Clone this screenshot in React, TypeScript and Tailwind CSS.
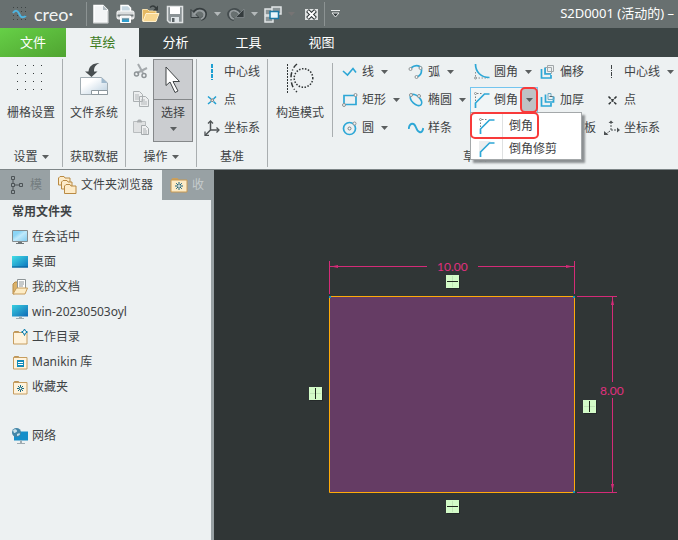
import React from 'react'

type IconComponent = React.FunctionComponent
interface CommandItem {
	label: string,
	icon: IconComponent,
	menu?: boolean
}

const CaretIcon: React.FunctionComponent<{className?: string}> = ({className = 'text-[#5b5f60]'}) => (
	<svg aria-hidden="true" className={`shrink-0 ${className}`} width="7" height="4" viewBox="0 0 7 4">
		<path d="M0 0h7L3.5 4z" fill="currentColor" />
	</svg>
)

/* Quick access bar */

const CreoIcon: IconComponent = () => (
	<svg aria-hidden="true" width="16" height="16" viewBox="0 0 16 16">
		<path d="M1 1.5h14M1 5.5h14M1 9.5h14M1 13.5h14" stroke="#3c4344" strokeDasharray="1 3" />
		<path d="M1 7c1.800-3 4.500-3 6 .5s3.500 5 7 2.500" fill="none" stroke="#4fb4e0" strokeWidth="2" />
	</svg>
)

const NewIcon: IconComponent = () => (
	<svg aria-hidden="true" width="18" height="20" viewBox="0 0 18 20">
		<path d="M2 1.500h9l4.500 4.500v12.500H2z" fill="#f3f5f6" stroke="#fff" strokeWidth="1.500" />
		<path d="M11 1.500v4.500h4.500z" fill="#aeb8bd" />
		<path d="M1.500 19h14.500V7" fill="none" stroke="#b7bcbd" />
	</svg>
)

const PrintIcon: IconComponent = () => (
	<svg aria-hidden="true" width="19" height="20" viewBox="0 0 19 20">
		<path d="M5 1.500h7l2.500 2.500v5H5z" fill="#c6d7e1" stroke="#fff" strokeWidth="1.500" />
		<rect x="1" y="7" width="17" height="8" rx="1.500" fill="#d9dcdd" stroke="#fff" />
		<path d="M1.500 11.500h16" stroke="#71797b" strokeWidth="2" />
		<path d="M4.500 12h10v6.500h-10z" fill="#eef2f4" stroke="#fff" />
		<path d="M6 14.500h7v3.500H6z" fill="#2f9fd0" />
		<path d="M6 15h7" stroke="#788286" />
	</svg>
)

const OpenIcon: IconComponent = () => (
	<svg aria-hidden="true" width="19" height="20" viewBox="0 0 19 20">
		<path d="M1.500 17V5.500h5L8 7h7v10z" fill="#e5b861" stroke="#f4dfae" />
		<path d="M2 17.500l3-8h13l-3 8z" fill="#f8d791" stroke="#fff0cd" />
		<path d="M9 3.500c2-2 4-2 6 .5" fill="none" stroke="#343b3c" strokeWidth="1.500" />
		<path d="M17 1.500v5h-5z" fill="#343b3c" />
	</svg>
)

const SaveIcon: IconComponent = () => (
	<svg aria-hidden="true" width="18" height="20" viewBox="0 0 18 20">
		<path d="M1.500 2.500h15v16h-13l-2-2z" fill="#8b9396" stroke="#dfe2e3" strokeWidth="1.500" />
		<path d="M4 3h10v7H4z" fill="#fff" />
		<path d="M5 13h8v5H5z" fill="#dfe5e8" />
		<path d="M6 14h2.500v4H6z" fill="#596164" />
	</svg>
)

const UndoIcon: IconComponent = () => (
	<svg aria-hidden="true" width="18" height="14" viewBox="0 0 18 14">
		<path d="M3 7c2-4 6-5.500 9.500-4 4 2 3.500 8-1.500 9" fill="none" stroke="#363d3f" strokeWidth="3.500" />
		<path d="M1 2.500v8h8z" fill="#858c8e" stroke="#363d3f" />
		<path d="M4 8c2-4 5-5.500 8-4 3.500 1.500 3 6.500-1 8" fill="none" stroke="#969c9e" strokeWidth="2" />
	</svg>
)

const RedoIcon: IconComponent = () => (
	<svg aria-hidden="true" width="18" height="14" viewBox="0 0 18 14">
		<path d="M7 12.500c-6-1.500-6.500-7-2.500-9 3.500-1.500 6.500 0 8.500 3" fill="none" stroke="#454d4f" strokeWidth="3.500" />
		<path d="M17 2v8.500H8.500z" fill="#343b3d" stroke="#8a9193" strokeWidth=".7" />
		<path d="M7 12c-5-1.500-5-6.500-2-8 3-1.200 5.500.5 7.500 3" fill="none" stroke="#969c9e" strokeWidth="1.700" />
	</svg>
)

const WindowsIcon: IconComponent = () => (
	<svg aria-hidden="true" width="18" height="17" viewBox="0 0 18 17">
		<g fill="#8c9597" stroke="#e1e5e6" strokeWidth="1.500">
			<path d="M1 3h8v6H1z" />
			<path d="M8 1h9v7H8z" />
			<path d="M1 10h8v6H1z" />
		</g>
		<path d="M6 5.500h8.500v7H6z" fill="#e8f6fb" stroke="#1c79a4" strokeWidth="1.500" />
	</svg>
)

const CloseWindowIcon: IconComponent = () => (
	<svg aria-hidden="true" width="13" height="11" viewBox="0 0 13 11">
		<rect width="13" height="11" fill="#dfe2e2" />
		<path d="M2.500 1.500l8 8M10.500 1.500l-8 8" stroke="#333a3c" strokeWidth="4" />
		<path d="M3 2l7 7M10 2L3 9" stroke="#fff" strokeWidth="1.800" />
	</svg>
)

const CustomizeIcon: IconComponent = () => (
	<svg aria-hidden="true" width="9" height="8" viewBox="0 0 9 8">
		<path d="M0 .5h9" stroke="#e8eaea" />
		<path d="M1 3h7L4.500 7z" fill="#30383a" stroke="#e8eaea" />
	</svg>
)

/* Ribbon: large icons */

const GridIcon: IconComponent = () => (
	<svg aria-hidden="true" width="28" height="28" viewBox="0 0 28 28">
		<path d="M0 2.500h28M0 10.500h28M0 18.500h28M0 26.500h28" stroke="#34393a" strokeDasharray="1 7" />
	</svg>
)

const FileSystemIcon: IconComponent = () => (
	<svg aria-hidden="true" width="28" height="34" viewBox="0 0 28 34">
		<defs>
			<linearGradient id="sheet" x1="0" y1="0" x2="1" y2="1">
				<stop offset=".3" stopColor="#fff" />
				<stop offset="1" stopColor="#b8cedf" />
			</linearGradient>
		</defs>
		<path d="M.5 14.500h21l6 5.500v11.500H.5z" fill="url(#sheet)" stroke="#a2adb3" />
		<path d="M21.500 14.500v5.500h6z" fill="#9fb9cd" />
		<path d="M11.500 27.500h16v4h-16zM18.500 27.500v4" fill="#fff" stroke="#8c979d" />
		<path d="M19.500 0C12.500 0 9 3.500 8.500 8.500H5L11.500 14l6-5.500h-3.500C14 4 15.500 2 19.500 0z" fill="#484e50" />
	</svg>
)

const CutIcon: IconComponent = () => (
	<svg aria-hidden="true" width="16" height="16" viewBox="0 0 16 16">
		<path d="M5 1l5 9M14 5L4 10" stroke="#a5aaad" strokeWidth="2" />
		<circle cx="3.500" cy="11" r="2" fill="none" stroke="#8e9497" strokeWidth="1.500" />
		<circle cx="11" cy="12.500" r="2" fill="none" stroke="#8e9497" strokeWidth="1.500" />
	</svg>
)

const CopyIcon: IconComponent = () => (
	<svg aria-hidden="true" width="16" height="16" viewBox="0 0 16 16">
		<path d="M.5.5h6l3 3v7h-9zM6.500 5.500h6l3 3v7h-9z" fill="#eceeef" stroke="#abb0b2" />
		<path d="M2 4h4M2 6h4M2 8h4M8 9h4M8 11h6M8 13h6" stroke="#b3b7b9" />
	</svg>
)

const PasteIcon: IconComponent = () => (
	<svg aria-hidden="true" width="16" height="16" viewBox="0 0 16 16">
		<path d="M.5 2.500h12v11H.5z" fill="#e0e2e3" stroke="#b9bdbf" />
		<path d="M4 3.500h5V2L7.500.5h-2L4 2z" fill="#a9adaf" />
		<path d="M8.500 6.500h4l3 3v6h-7z" fill="#f0f1f2" stroke="#a5aaac" />
		<path d="M10 10h3M10 12h4M10 14h4" stroke="#acb1b3" />
	</svg>
)

const CursorIcon: IconComponent = () => (
	<svg aria-hidden="true" width="16" height="28" viewBox="0 0 16 28">
		<path d="M1 1v18.500l4-3.500 5 10.500 3-1.500-5-9.500h6.500z" fill="#fff" stroke="#3f4345" />
	</svg>
)

const ConstructionIcon: IconComponent = () => (
	<svg aria-hidden="true" width="28" height="30" viewBox="0 0 28 30">
		<g fill="none" stroke="#303536" strokeWidth="1.500">
			<path d="M1.500 1v29" strokeDasharray="2 1" strokeWidth="1" />
			<path d="M11 1C3 7 3 23 11 29" strokeDasharray="5 2 1 2" />
			<circle cx="17.500" cy="15" r="9.300" strokeDasharray="1.500 1.500" />
		</g>
	</svg>
)

/* Ribbon: small icons */

const CenterLineIcon: IconComponent = () => (
	<svg aria-hidden="true" width="16" height="16" viewBox="0 0 16 16">
		<path d="M8 0v16" stroke="#1d9fd2" strokeWidth="2" strokeDasharray="4 1" />
	</svg>
)

const PointIcon: IconComponent = () => (
	<svg aria-hidden="true" width="16" height="16" viewBox="0 0 16 16">
		<path d="M4 4.500l3 2.500M12 4.500L9.500 7M4 12l3-2.500M12 12L9.500 9.500" stroke="#1d9fd2" strokeWidth="1.500" />
		<circle cx="8.200" cy="8.200" r="1.300" fill="#fff" stroke="#676d6f" />
	</svg>
)

const AxesIcon: IconComponent = () => (
	<svg aria-hidden="true" width="16" height="16" viewBox="0 0 16 16">
		<path d="M6.500 1.500V10M6.500 10H15M6.500 10L1.500 15" stroke="#4d5254" strokeWidth="1.500" />
		<path d="M4 3.500L6.500 1 9 3.500M12.500 7.500L15 10l-2.500 2.500M1 11.500v4h4" fill="none" stroke="#4d5254" strokeWidth="1.300" />
	</svg>
)

const LineIcon: IconComponent = () => (
	<svg aria-hidden="true" width="16" height="16" viewBox="0 0 16 16">
		<path d="M1 7l4.500 4 5.500-6.500 3 4" fill="none" stroke="#2da7d6" strokeWidth="1.600" />
	</svg>
)

const RectangleIcon: IconComponent = () => (
	<svg aria-hidden="true" width="16" height="16" viewBox="0 0 16 16">
		<path d="M2 3.500h12v9H2z" fill="none" stroke="#2da7d6" strokeWidth="1.700" />
		<circle cx="13.500" cy="3" r="1.500" fill="#f4f6f6" stroke="#8d9294" />
		<circle cx="2" cy="13" r="1.500" fill="#f4f6f6" stroke="#8d9294" />
	</svg>
)

const CircleIcon: IconComponent = () => (
	<svg aria-hidden="true" width="16" height="16" viewBox="0 0 16 16">
		<circle cx="7.500" cy="8.500" r="6" fill="none" stroke="#2da7d6" strokeWidth="1.700" />
		<circle cx="7.500" cy="8.500" r="1.500" fill="#f4f6f6" stroke="#777d7f" />
		<circle cx="12.500" cy="3.500" r="1.500" fill="#f4f6f6" stroke="#8d9294" />
	</svg>
)

const ArcIcon: IconComponent = () => (
	<svg aria-hidden="true" width="16" height="16" viewBox="0 0 16 16">
		<path d="M3 4c5-4.500 11-2 10.500 2.500 0 3-2 5.500-4.500 6.500" fill="none" stroke="#2da7d6" strokeWidth="1.700" />
		<g fill="#f4f6f6" stroke="#8d9294">
			<circle cx="2.500" cy="5" r="1.500" />
			<circle cx="12.500" cy="4" r="1.500" />
			<circle cx="8.500" cy="13" r="1.500" />
		</g>
	</svg>
)

const EllipseIcon: IconComponent = () => (
	<svg aria-hidden="true" width="16" height="16" viewBox="0 0 16 16">
		<ellipse cx="8" cy="8" rx="7" ry="4" transform="rotate(43 8 8)" fill="none" stroke="#2da7d6" strokeWidth="1.600" />
		<circle cx="3" cy="3" r="1.500" fill="#f4f6f6" stroke="#8d9294" />
		<circle cx="11" cy="4" r="1.500" fill="#f4f6f6" stroke="#8d9294" />
	</svg>
)

const SplineIcon: IconComponent = () => (
	<svg aria-hidden="true" width="16" height="16" viewBox="0 0 16 16">
		<path d="M.7 9C1.500 2.500 6 2 8 7.500s6 7 7.300.5" fill="none" stroke="#2da7d6" strokeWidth="1.900" />
	</svg>
)

const FilletIcon: IconComponent = () => (
	<svg aria-hidden="true" width="16" height="16" viewBox="0 0 16 16">
		<path d="M1.500 8v6H14" fill="none" stroke="#8c9294" strokeDasharray="1.500 1.500" />
		<path d="M1.500 0C1.500 8 7 13.500 15.500 13.500" fill="none" stroke="#2da7d6" strokeWidth="1.700" />
		<circle cx="1.500" cy="14" r="1" fill="#f4f6f6" stroke="#8c9294" />
	</svg>
)

const ChamferIcon: IconComponent = () => (
	<svg aria-hidden="true" width="16" height="16" viewBox="0 0 16 16">
		<path d="M1.500 9V1.500H9" fill="none" stroke="#777d7f" strokeDasharray="1.500 1.500" />
		<path d="M1.500 16v-5l9-9h5" fill="none" stroke="#2da7d6" strokeWidth="1.700" />
		<circle cx="1.500" cy="1.500" r="1" fill="#fff" stroke="#8c9294" />
	</svg>
)

const ChamferTrimIcon: IconComponent = () => (
	<svg aria-hidden="true" width="16" height="16" viewBox="0 0 16 16">
		<path d="M0 0h12L1 11H0z" fill="#eceeef" />
		<path d="M1.500 16v-5l9-9h5" fill="none" stroke="#2da7d6" strokeWidth="1.700" />
	</svg>
)

const OffsetIcon: IconComponent = () => (
	<svg aria-hidden="true" width="16" height="16" viewBox="0 0 16 16">
		<path d="M7.500 1.500h6v6h-6zM5.500 3.500h6v6h-6z" fill="none" stroke="#a1a7a9" />
		<path d="M5 3.500v6.500h6" fill="none" stroke="#2da7d6" strokeWidth="1.700" />
		<path d="M1.500 5v9H11v-3" fill="none" stroke="#2da7d6" strokeWidth="1.700" />
	</svg>
)

const ThickenIcon: IconComponent = () => (
	<svg aria-hidden="true" width="16" height="16" viewBox="0 0 16 16">
		<path d="M1.500 5v9H11v-3M5.500 2.500V10h8V5" fill="none" stroke="#2da7d6" strokeWidth="1.700" />
		<path d="M8 1.500h3v3h3v3H8z" fill="none" stroke="#6eaac4" />
		<path d="M9.500 4.500h3" stroke="#5c6466" />
	</svg>
)

const PaletteIcon: IconComponent = () => (
	<svg aria-hidden="true" width="16" height="16" viewBox="0 0 16 16">
		<path d="M1.500 2.500h13v11h-13zM6 3v10" fill="none" stroke="#2da7d6" />
	</svg>
)

const SketchCenterLineIcon: IconComponent = () => (
	<svg aria-hidden="true" width="16" height="16" viewBox="0 0 16 16">
		<path d="M7.500 1v14" stroke="#3d4244" strokeDasharray="4 1 1 1" />
	</svg>
)

const SketchPointIcon: IconComponent = () => (
	<svg aria-hidden="true" width="16" height="16" viewBox="0 0 16 16">
		<path d="M4.500 4.500l8 8M12.500 4.500l-8 8" stroke="#303536" strokeWidth="1.500" strokeDasharray="3 1" />
	</svg>
)

const SketchAxesIcon: IconComponent = () => (
	<svg aria-hidden="true" width="16" height="16" viewBox="0 0 16 16">
		<path d="M7 2v8M7 10h7M6 11l-4 3" stroke="#4d5254" strokeDasharray="2 1" />
		<path d="M4.500 3L7 .5 9.500 3zM13 7.500l3 2.500-3 2.500zM0 11v4h4.500z" fill="#4d5254" />
	</svg>
)

/* Navigator icons */

const TreeIcon: IconComponent = () => (
	<svg aria-hidden="true" className="shrink-0" width="14" height="20" viewBox="0 0 14 20">
		<path d="M1.500 1.500h3v3h-3zM1.500 8.500h3v3h-3zM1.500 15.500h3v3h-3zM9.500 8.500h3v3h-3zM3 5v3M3 12v3M5 10h4" fill="none" stroke="#4c5356" />
	</svg>
)

const FoldersIcon: IconComponent = () => (
	<svg aria-hidden="true" width="20" height="20" viewBox="0 0 20 20">
		<g fill="#fdebc8" stroke="#b98a43">
			<path d="M1.500 10V3L3 1.500h4L8 3h5v7z" />
			<path d="M4.500 14V7L6 5.500h4L11 7h4v7z" />
			<path d="M7.500 18.500V11L9 9.500h4l1 1.500h5v7.500z" />
		</g>
	</svg>
)

const FavoritesIcon: IconComponent = () => (
	<svg aria-hidden="true" className="shrink-0" width="18" height="16" viewBox="0 0 18 16">
		<path d="M1 3l1.500-2h5L9 3z" fill="#cda05b" />
		<path d="M1 3h16v12H1z" fill="#fdebc5" stroke="#c79952" />
		<path d="M9 5v8M5 9h8M6.200 6.200l5.600 5.600M11.800 6.200l-5.600 5.600" stroke="#17617f" />
		<circle cx="9" cy="9" r="1" fill="#fff" />
	</svg>
)

const MonitorShape: React.FunctionComponent<{fill: string}> = ({fill}) => (
	<>
		<path d="M0 1h16v11.500H0z" fill={fill} />
		<path d="M7 12.500h3V14H7zM4 14h8v1H4z" fill="#9eabb1" />
	</>
)

const SessionIcon: IconComponent = () => (
	<svg aria-hidden="true" width="16" height="16" viewBox="0 0 16 16">
		<defs>
			<linearGradient id="session" x1="0" y1="0" x2="1" y2="1">
				<stop offset=".3" stopColor="#8bd5f6" />
				<stop offset=".5" stopColor="#bfe9fb" />
				<stop offset="1" stopColor="#7ccaf0" />
			</linearGradient>
		</defs>
		<path d="M.5 1.500h15v11H.5z" fill="url(#session)" stroke="#858d90" />
		<path d="M6 13h4v1h2v1H4v-1h2z" fill="#6e7678" />
	</svg>
)

const DesktopIcon: IconComponent = () => (
	<svg aria-hidden="true" width="16" height="16" viewBox="0 0 16 16">
		<defs>
			<linearGradient id="screen" x1="0" y1="0" x2="1" y2="1">
				<stop offset="0" stopColor="#43dfe6" />
				<stop offset="1" stopColor="#0a72bd" />
			</linearGradient>
		</defs>
		<path d="M0 2h16v11.500H0z" fill="url(#screen)" />
		<path d="M0 13h16" stroke="#075b94" />
	</svg>
)

const DocumentsIcon: IconComponent = () => (
	<svg aria-hidden="true" width="16" height="16" viewBox="0 0 16 16">
		<path d="M1 15V5l2-2h3v11z" fill="#dbb26a" stroke="#b58b4b" />
		<path d="M5.500.5h8v11h-8z" fill="#fff" stroke="#8d9496" />
		<path d="M7 3h5M7 5h5M7 7h4" stroke="#8d9496" />
		<path d="M1 15l3.500-6h11L13 15z" fill="#fdecc5" stroke="#c79c5b" />
	</svg>
)

const ComputerIcon: IconComponent = () => (
	<svg aria-hidden="true" width="16" height="16" viewBox="0 0 16 16">
		<defs>
			<linearGradient id="computer" x1="0" y1="0" x2="1" y2="1">
				<stop offset="0" stopColor="#38cfe0" />
				<stop offset="1" stopColor="#1069b6" />
			</linearGradient>
		</defs>
		<MonitorShape fill="url(#computer)" />
	</svg>
)

const FolderShape: IconComponent = () => (
	<>
		<path d="M1 4l1.500-2h4L8 4z" fill="#bd9558" />
		<path d="M1.500 3.500h13.500v11.500H1.500z" fill="#fff3dc" stroke="#c69d5f" />
	</>
)

const WorkDirIcon: IconComponent = () => (
	<svg aria-hidden="true" width="16" height="16" viewBox="0 0 16 16">
		<FolderShape />
		<path d="M12.500 0l1 2 2 1-2 1-1 2.500-1-2.500-2-1 2-1z" fill="#f3fbff" stroke="#087ba8" />
	</svg>
)

const LibraryIcon: IconComponent = () => (
	<svg aria-hidden="true" width="16" height="16" viewBox="0 0 16 16">
		<FolderShape />
		<path d="M5 6h7v7H5z" fill="#138bb8" />
		<path d="M6 8.500h5M6 10.500h5" stroke="#fff" />
	</svg>
)

const FavoriteFolderIcon: IconComponent = () => (
	<svg aria-hidden="true" width="16" height="16" viewBox="0 0 16 16">
		<FolderShape />
		<path d="M8.500 6v7M5 9.500h7M6 7l5 5M11 7l-5 5" stroke="#176b83" />
		<circle cx="8.500" cy="9.500" r="1" fill="#fff" />
	</svg>
)

const NetworkIcon: IconComponent = () => (
	<svg aria-hidden="true" width="16" height="16" viewBox="0 0 16 16">
		<path d="M2 3.500h14v9H2z" fill="#168ec9" />
		<path d="M8 12.500h2V15h3v1H5v-1h3z" fill="#9eabb1" />
		<circle cx="4.500" cy="4.500" r="4.500" fill="#4386a8" />
		<path d="M1 2.500c2-2 3-1 4 0S3 5 2 5zM5 6c2-1 3-1 3 0S6 8 5 8z" fill="#c9e1ea" />
	</svg>
)

const datumCommands: CommandItem[] = [
	{ label: '中心线', icon: CenterLineIcon },
	{ label: '点', icon: PointIcon },
	{ label: '坐标系', icon: AxesIcon },
]

const shapeCommands: CommandItem[] = [
	{ label: '线', icon: LineIcon, menu: true },
	{ label: '矩形', icon: RectangleIcon, menu: true },
	{ label: '圆', icon: CircleIcon, menu: true },
]

const curveCommands: CommandItem[] = [
	{ label: '弧', icon: ArcIcon, menu: true },
	{ label: '椭圆', icon: EllipseIcon, menu: true },
	{ label: '样条', icon: SplineIcon },
]

const offsetCommands: CommandItem[] = [
	{ label: '偏移', icon: OffsetIcon },
	{ label: '加厚', icon: ThickenIcon },
	{ label: '选项板', icon: PaletteIcon },
]

const sketchDatumCommands: CommandItem[] = [
	{ label: '中心线', icon: SketchCenterLineIcon, menu: true },
	{ label: '点', icon: SketchPointIcon },
	{ label: '坐标系', icon: SketchAxesIcon },
]

const folders: CommandItem[] = [
	{ label: '在会话中', icon: SessionIcon },
	{ label: '桌面', icon: DesktopIcon },
	{ label: '我的文档', icon: DocumentsIcon },
	{ label: 'win-20230503oyl', icon: ComputerIcon },
	{ label: '工作目录', icon: WorkDirIcon },
	{ label: 'Manikin 库', icon: LibraryIcon },
	{ label: '收藏夹', icon: FavoriteFolderIcon },
]

const QuickButton: React.FunctionComponent<{label: string, children: React.ReactNode}> = ({label, children}) => (
	<button type="button" aria-label={label} className="flex shrink-0 items-center justify-center">
		{children}
	</button>
)

const TitleBar: React.FunctionComponent = () => (
	<header className="flex h-7 items-center bg-[#687070] text-white">
		<div className="flex w-[86px] shrink-0 items-center gap-1.5 pl-3">
			<CreoIcon />
			<span className="text-lg leading-6 font-[Lato] text-[#f2f4f4]">creo<sup className="text-[8px]">•</sup></span>
		</div>
		<div className="flex h-6 shrink-0 items-center gap-1.5 border-x border-[#8c9393] pl-[5px] pr-1.5">
			<QuickButton label="新建"><NewIcon /></QuickButton>
			<QuickButton label="打印"><PrintIcon /></QuickButton>
			<QuickButton label="打开"><OpenIcon /></QuickButton>
			<QuickButton label="保存"><SaveIcon /></QuickButton>
			<QuickButton label="撤消"><UndoIcon /></QuickButton>
			<QuickButton label="撤消列表"><CaretIcon className="text-[#b4b9ba]" /></QuickButton>
			<QuickButton label="重做"><RedoIcon /></QuickButton>
			<QuickButton label="重做列表"><CaretIcon className="text-[#b4b9ba]" /></QuickButton>
			<QuickButton label="窗口"><WindowsIcon /></QuickButton>
			<QuickButton label="窗口列表"><CaretIcon className="text-[#767474]" /></QuickButton>
			<div className="ml-1 flex"><QuickButton label="关闭"><CloseWindowIcon /></QuickButton></div>
		</div>
		<div className="ml-1.5 flex"><QuickButton label="自定义"><CustomizeIcon /></QuickButton></div>
		<h1 className="ml-auto shrink-0 pr-1 text-[13px] whitespace-nowrap">S2D0001 (活动的) –</h1>
	</header>
)

const RibbonTabs: React.FunctionComponent = () => (
	<nav className="flex h-[29px] bg-[#3c4545] text-[13px] text-white">
		<button type="button" className="w-[66px] bg-linear-to-br from-[#66d047] to-[#50a431]">文件</button>
		<button type="button" className="w-[73px] bg-[#edf1f2] text-[#3e7c1d]">草绘</button>
		<button type="button" className="w-[73px]">分析</button>
		<button type="button" className="w-[73px]">工具</button>
		<button type="button" className="w-[73px]">视图</button>
	</nav>
)

const Group: React.FunctionComponent<{title: string, menu?: boolean, className: string, children: React.ReactNode}> = ({title, menu, className, children}) => (
	<section className={`flex flex-col ${className}`}>
		<div className="flex h-[86px] justify-center">{children}</div>
		<div className="flex h-6 items-center justify-center gap-1">
			{title}
			{menu ? <CaretIcon /> : null}
		</div>
	</section>
)

const Separator: React.FunctionComponent = () => (
	<div className="mb-0.5 w-px shrink-0 bg-[#a9aeb0]" />
)

const LargeButton: React.FunctionComponent<{label: string, children: React.ReactNode}> = ({label, children}) => (
	<button type="button" className="flex flex-col items-center pt-1 whitespace-nowrap">
		<span className="flex h-[42px] items-start">{children}</span>
		<span>{label}</span>
	</button>
)

const CommandColumn: React.FunctionComponent<{commands: CommandItem[], className?: string}> = ({commands, className = ''}) => (
	<div className={`flex shrink-0 flex-col ${className}`}>
		{commands.map(({label, icon: Icon, menu}) => (
			<button key={label} type="button" className="flex h-7 items-center gap-1 pb-0.5 whitespace-nowrap">
				<Icon />
				<span>{label}</span>
				{menu ? <span className="ml-[3px]"><CaretIcon /></span> : null}
			</button>
		))}
	</div>
)

const ChamferMenu: React.FunctionComponent = () => (
	<div role="menu" className="absolute top-6 -left-px z-10 w-28 border border-[#a4a8aa] bg-white shadow-[3px_3px_2px_#8c9092]">
		<button type="button" role="menuitem" className="flex h-[25px] w-[67px] items-center rounded-sm outline-2 -outline-offset-1 outline-[#f83a3a]">
			<span className="flex h-full w-8 items-center justify-center border-r border-[#dfe1e2]"><ChamferIcon /></span>
			<span className="pl-1.5">倒角</span>
		</button>
		<button type="button" role="menuitem" className="flex h-[21px] w-full items-center">
			<span className="flex h-full w-8 items-center justify-center border-r border-[#dfe1e2]"><ChamferTrimIcon /></span>
			<span className="pl-1.5">倒角修剪</span>
		</button>
	</div>
)

const CornerCommands: React.FunctionComponent = () => (
	<div className="flex w-[68px] shrink-0 flex-col">
		<button type="button" className="flex h-7 items-center gap-1 pb-0.5 pl-1">
			<FilletIcon />
			<span>圆角</span>
			<span className="ml-[3px]"><CaretIcon /></span>
		</button>
		<div className="relative flex h-[26px] border border-[#73c5ef] bg-[#f1f5f6]">
			<button type="button" className="flex flex-1 items-center gap-1 pl-[3px] whitespace-nowrap">
				<ChamferIcon />
				<span>倒角</span>
			</button>
			<button type="button" aria-label="倒角选项" className="flex w-4 items-center justify-center rounded-sm bg-[#bfc2c5] outline-2 -outline-offset-1 outline-[#f83a3a]">
				<CaretIcon />
			</button>
			<ChamferMenu />
		</div>
	</div>
)

const Ribbon: React.FunctionComponent = () => (
	<div className="flex h-[113px] shrink-0 border-b border-[#7d8587] bg-[#edf1f2] pt-0.5">
		<Group title="设置" menu className="w-[62px] shrink-0">
			<LargeButton label="栅格设置"><GridIcon /></LargeButton>
		</Group>
		<Separator />
		<Group title="获取数据" className="w-[62px] shrink-0">
			<LargeButton label="文件系统"><FileSystemIcon /></LargeButton>
		</Group>
		<Separator />
		<Group title="操作" menu className="w-[70px] shrink-0">
			<div className="flex flex-col gap-3 px-1 pt-1">
				<button type="button" aria-label="剪切"><CutIcon /></button>
				<button type="button" aria-label="复制"><CopyIcon /></button>
				<button type="button" aria-label="粘贴"><PasteIcon /></button>
			</div>
			<button type="button" className="flex h-[83px] w-10 flex-col items-center border border-[#85888a] bg-[#cbcdd0]">
				<span className="flex h-10 w-full shrink-0 items-center justify-center border-b border-[#85888a]"><CursorIcon /></span>
				<span className="pt-[5px]">选择</span>
				<span className="pt-1.5"><CaretIcon /></span>
			</button>
		</Group>
		<Separator />
		<Group title="基准" className="w-[70px] shrink-0">
			<CommandColumn commands={datumCommands} />
		</Group>
		<Separator />
		<div className="flex w-16 shrink-0 justify-center">
			<div><LargeButton label="构造模式"><ConstructionIcon /></LargeButton></div>
		</div>
		<div className="mt-1 h-[74px] w-px shrink-0 bg-[#a9aeb0]" />
		<section className="flex flex-1 flex-col">
			<div className="flex h-[86px] pl-[9px]">
				<CommandColumn commands={shapeCommands} className="w-[66px]" />
				<CommandColumn commands={curveCommands} className="w-[62px]" />
				<CornerCommands />
				<CommandColumn commands={offsetCommands} className="w-[66px] pl-0.5" />
				<CommandColumn commands={sketchDatumCommands} />
			</div>
			<div className="flex h-6 items-center pl-[130px]">草绘</div>
		</section>
	</div>
)

const Navigator: React.FunctionComponent = () => (
	<aside className="flex w-[214px] shrink-0 flex-col border-r-3 border-[#98a1a4] bg-[#edf1f2]">
		<div className="flex h-[30px] bg-[#98a1a4]">
			<button type="button" aria-label="模型树" className="flex w-[50px] shrink-0 items-center gap-1.5 pl-2.5">
				<TreeIcon />
				<span className="text-[#747d80]">模</span>
			</button>
			<button type="button" className="flex w-28 shrink-0 items-center gap-1 bg-[#edf1f2] pl-[7px] whitespace-nowrap">
				<FoldersIcon />
				<span>文件夹浏览器</span>
			</button>
			<button type="button" aria-label="收藏夹" className="flex flex-1 items-center gap-1 pl-2">
				<FavoritesIcon />
				<span className="text-[#c6cccd]">收</span>
			</button>
		</div>
		<div className="px-3">
			<h2 className="flex h-6 items-center font-bold">常用文件夹</h2>
			<ul>
				{folders.map(({label, icon: Icon}) => (
					<li key={label}>
						<button type="button" className="flex h-[25px] items-center gap-1 whitespace-nowrap">
							<Icon />
							{label}
						</button>
					</li>
				))}
			</ul>
			<button type="button" className="mt-6 flex h-[25px] items-center gap-1">
				<NetworkIcon />
				网络
			</button>
		</div>
	</aside>
)

const Constraint: React.FunctionComponent<{x: number, y: number, vertical?: boolean}> = ({x, y, vertical}) => (
	<g>
		<path d={`M${x + 1} ${y + 1}h13v13h-13z`} fill="#242929" />
		<path d={`M${x} ${y}h13v13h-13z`} fill="#d3fbc8" />
		<path d={vertical ? `M${x + 1} ${y + 6.5}h11` : `M${x + 6.5} ${y + 1}v11`} stroke="#c0e5b7" />
		<path d={vertical ? `M${x + 6.5} ${y + 1}v11` : `M${x + 1} ${y + 6.5}h11`} stroke="#20281f" />
	</g>
)

const SketchCanvas: React.FunctionComponent = () => (
	<main className="min-w-0 flex-1 bg-[#303636]">
		<svg role="img" aria-label="草绘" width="464" height="370" viewBox="0 0 464 370">
			<path d="M115.500 126.500h245v196h-245z" fill="#653c64" stroke="#ffab09" />
			<g fill="none" stroke="#d42b78">
				<path d="M115.500 91v33M360.500 91v33M116 96.500h97M264 96.500h96" />
				<path d="M363 126.500h40M363 322.500h40M398.500 127v85M398.500 228v94" />
			</g>
			<path d="M117 96.500l7-1.500v3zM359 96.500l-7-1.500v3zM398.500 128l-1.500 7h3zM398.500 321l-1.500-7h3z" fill="#d42b78" />
			<g fill="#e0307f" fontFamily="Lato, sans-serif" fontSize="12">
				<text x="223" y="101">10.00</text>
				<text x="386" y="225">8.00</text>
			</g>
			<path d="M115 126h2v2h-2zM359 126h2v2h-2zM359 321h2v2h-2z" fill="#1598b8" />
			<Constraint x={232} y={105} />
			<Constraint x={232} y={330} />
			<Constraint x={95} y={217} vertical />
			<Constraint x={369} y={230} vertical />
		</svg>
	</main>
)

const App: React.FunctionComponent = () => (
	<div className="flex min-h-screen flex-col bg-[#303636] font-['Noto_Sans','Noto_Sans_CJK_SC',sans-serif] text-xs text-[#3f4345]">
		<TitleBar />
		<RibbonTabs />
		<Ribbon />
		<div className="flex flex-1">
			<Navigator />
			<SketchCanvas />
		</div>
	</div>
)

export default App
